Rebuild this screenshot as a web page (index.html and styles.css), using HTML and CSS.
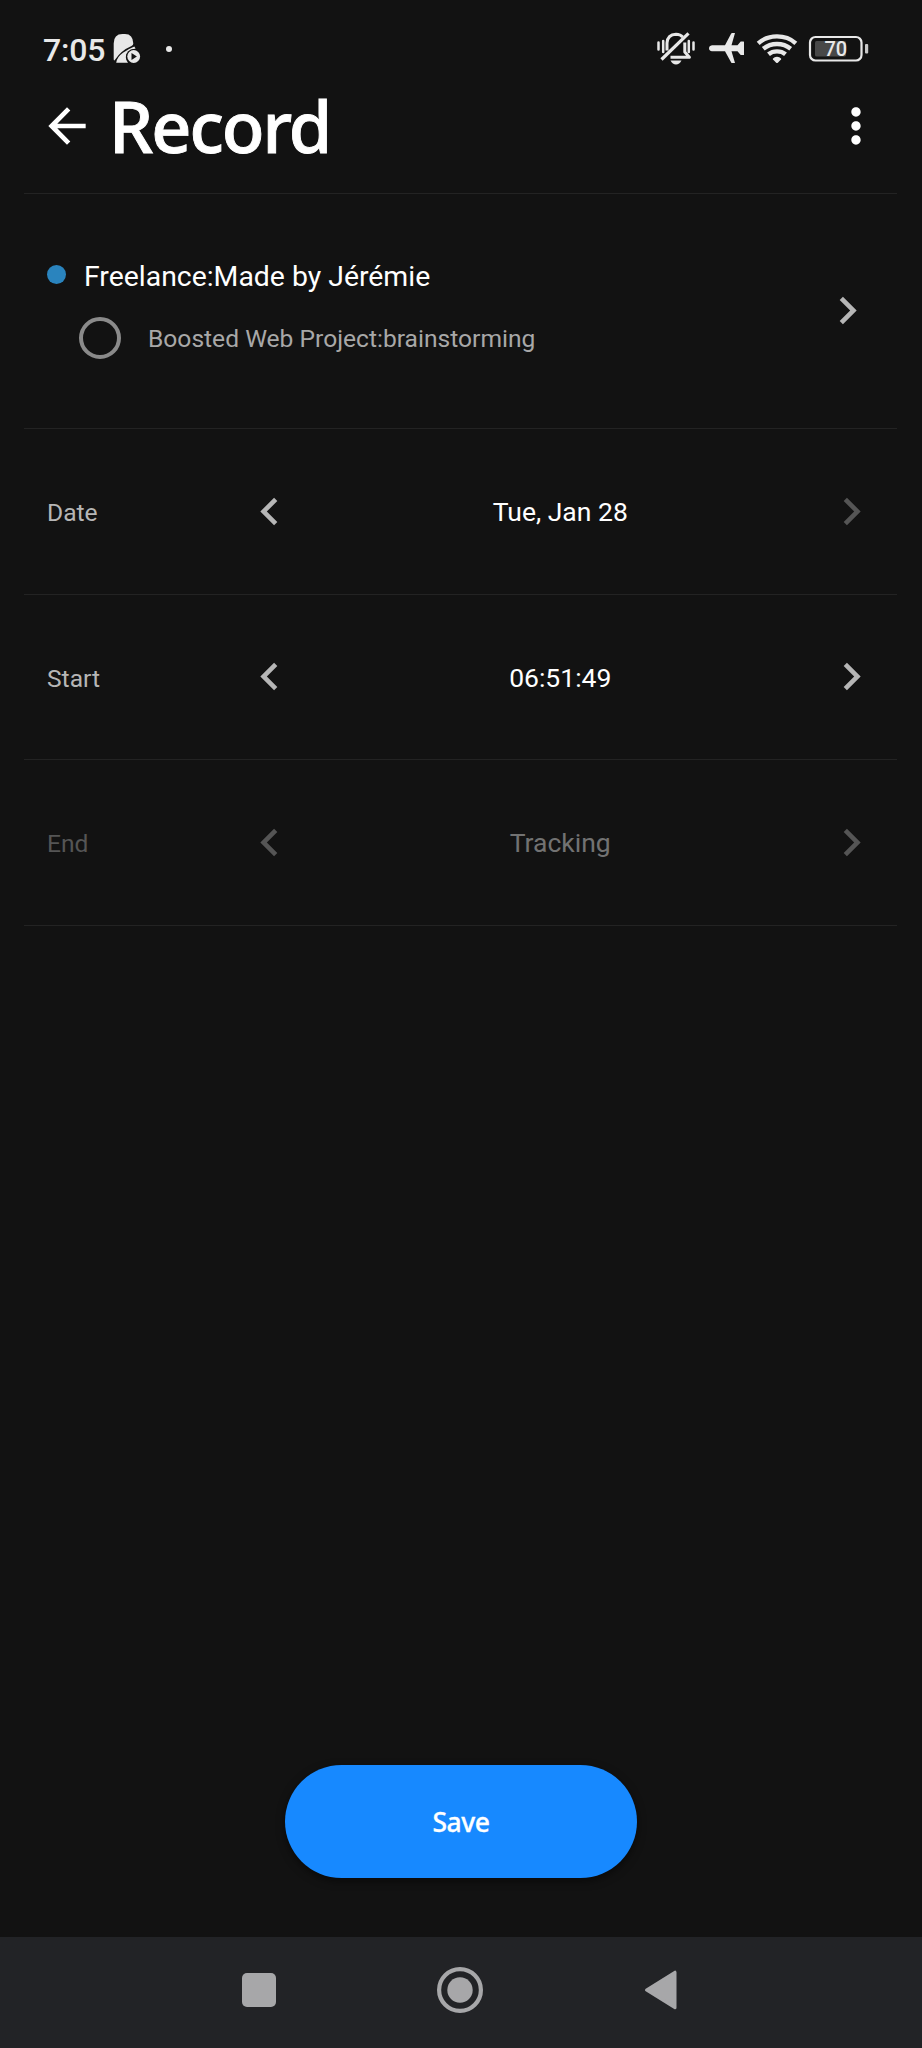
FILE: index.html
```html
<!DOCTYPE html>
<html lang="en">
<head>
<meta charset="utf-8">
<title>Record</title>
<link rel="stylesheet" href="styles.css">
</head>
<body>
<div class="screen">
  <div class="status">
    <span class="clock">7:05</span>
    <svg class="notif" width="28" height="31" viewBox="0 0 28 31">
      <path fill="#e8e8e8" d="M.7 10.500Q.7 1 9.500 1h2.500Q20 1 20.300 10.500Q20.300 12.300 18.500 13Q8 17.500 2 26.800Q.7 28.500.7 26z"/>
      <path fill="#e8e8e8" d="M3.200 29.700Q4 24 10 19.800Q15.500 16 21.300 13.600L22.600 15.600Q13.500 17.200 12.800 24Q13 28 15 29.700z"/>
      <circle cx="20.700" cy="23.500" r="7.600" fill="#121212"/>
      <circle cx="20.700" cy="23.500" r="6.400" fill="#e8e8e8"/>
      <path fill="#121212" d="M18.500 19.900v7.200l5.400-3.600z"/>
    </svg>
    <i class="more-notif"></i>
    <div class="status-icons">
      <svg width="40" height="36" viewBox="0 0 40 36" fill="none" stroke="#e8e8e8" stroke-width="2.500">
        <path d="M2.500 12.500v7M7.200 11v11M32.800 11v11M37.500 12.500v7" stroke-linecap="round"/>
        <path d="M11 20.500v-7.500Q11.500 4.500 20 4.200Q24.500 4.300 26.700 7" stroke-width="3"/>
        <path d="M28.800 12.500v9.500l4.600 5.300H14.500" stroke-width="3" stroke-linejoin="round"/>
        <path d="M32.500 3.300L5.500 29.500" stroke-width="3.200"/>
        <path fill="#e8e8e8" stroke="none" d="M14.500 30.500h11q-2 4-5.500 4t-5.500-4z"/>
      </svg>
      <svg class="plane" width="38" height="36" viewBox="0 0 38 36">
        <path fill="#e8e8e8" d="M4 15.200h13L23.200 3.500Q23.500 3 24.300 3h2.700L23.500 15.200h6L32.700 11.500h2.800q.5 0 .5.600v12.300q0 .6-.5.600h-2.800L29.500 21.200h-6L27 33h-2.700q-.8 0-1.100-.5L17 21.200H4Q1 20.700 1 18.200T4 15.200z"/>
      </svg>
      <svg width="42" height="36" viewBox="0 0 42 36" fill="none" stroke="#e8e8e8" stroke-width="4.400">
        <path d="M2.200 13.300Q10 6.400 21 6.400T39.800 13.300"/>
        <path d="M7.300 18.800Q13.200 14 21 14T34.700 18.800"/>
        <path d="M12.500 24.300Q16 21.400 21 21.400T29.500 24.300"/>
        <path fill="#e8e8e8" stroke="none" d="M21 26.800q2.600 0 4 1.600q.5.600 0 1.100l-3.200 3.200q-.8.700-1.600 0l-3.200-3.200q-.5-.5 0-1.100q1.400-1.600 4-1.600z"/>
      </svg>
      <svg width="62" height="36" viewBox="0 0 62 36">
        <rect x="2" y="7" width="51.500" height="23.500" rx="5.500" fill="none" stroke="#e8e8e8" stroke-width="2.200"/>
        <rect x="57" y="14" width="3.200" height="9.500" rx="1" fill="#c8c8c8"/>
        <rect x="7" y="11" width="31" height="15.500" rx="1.500" fill="#484848"/>
        <text class="battery-text" x="27.800" y="26" text-anchor="middle">70</text>
      </svg>
    </div>
  </div>

  <header class="header">
    <svg width="56" height="56" viewBox="0 0 24 24" fill="#fff"><path d="M20 11H7.830l5.590-5.590L12 4l-8 8 8 8 1.410-1.410L7.830 13H20z"/></svg>
    <h1 class="title">Record</h1>
    <svg class="menu" width="56" height="56" viewBox="0 0 24 24" fill="#fff"><path d="M12 8c1.100 0 2-.9 2-2s-.9-2-2-2-2 .9-2 2 .9 2 2 2zm0 2c-1.100 0-2 .9-2 2s.9 2 2 2 2-.9 2-2-.9-2-2-2zm0 6c-1.100 0-2 .9-2 2s.9 2 2 2 2-.9 2-2-.9-2-2-2z"/></svg>
  </header>

  <section class="task">
    <div class="task-lines">
      <div class="project"><i class="dot"></i><span class="project-name">Freelance:Made by Jérémie</span></div>
      <div class="subtask"><i class="ring"></i><span class="subtask-name">Boosted Web Project:brainstorming</span></div>
    </div>
    <svg class="chev" viewBox="0 0 24 24"><path d="M10 6L8.590 7.410 13.170 12l-4.580 4.590L10 18l6-6z"/></svg>
  </section>

  <section class="row">
    <span class="label">Date</span>
    <svg class="chev" viewBox="0 0 24 24"><path d="M15.410 7.410L14 6l-6 6 6 6 1.410-1.410L10.830 12z"/></svg>
    <span class="value">Tue, Jan 28</span>
    <svg class="chev dim" viewBox="0 0 24 24"><path d="M10 6L8.590 7.410 13.170 12l-4.580 4.590L10 18l6-6z"/></svg>
  </section>
  <section class="row">
    <span class="label">Start</span>
    <svg class="chev" viewBox="0 0 24 24"><path d="M15.410 7.410L14 6l-6 6 6 6 1.410-1.410L10.830 12z"/></svg>
    <span class="value">06:51:49</span>
    <svg class="chev" viewBox="0 0 24 24"><path d="M10 6L8.590 7.410 13.170 12l-4.580 4.590L10 18l6-6z"/></svg>
  </section>
  <section class="row">
    <span class="label off">End</span>
    <svg class="chev dim" viewBox="0 0 24 24"><path d="M15.410 7.410L14 6l-6 6 6 6 1.410-1.410L10.830 12z"/></svg>
    <span class="value value-off">Tracking</span>
    <svg class="chev dim" viewBox="0 0 24 24"><path d="M10 6L8.590 7.410 13.170 12l-4.580 4.590L10 18l6-6z"/></svg>
  </section>

  <div class="actions"><button class="save">Save</button></div>

  <nav class="nav">
    <svg width="48" height="48" viewBox="0 0 48 48" fill="#a7a7a9"><rect x="7" y="7" width="34" height="34" rx="5"/></svg>
    <svg width="48" height="48" viewBox="0 0 48 48" fill="#a7a7a9"><circle cx="24" cy="24" r="20.900" fill="none" stroke="#a7a7a9" stroke-width="4.200"/><circle cx="24" cy="24" r="12.700"/></svg>
    <svg width="48" height="48" viewBox="0 0 48 48" fill="#a7a7a9"><path stroke="#a7a7a9" stroke-width="3" stroke-linejoin="round" d="M8.500 24L37 6.200v35.600z"/></svg>
  </nav>
</div>
</body>
</html>
```
FILE: styles.css
```css
* { box-sizing: border-box; }
body { margin: 0; background: #121212; color: #fff; font-family: Roboto, "Noto Sans", sans-serif; }
svg { display: block; flex: none; }
.screen { width: 922px; height: 2048px; display: flex; flex-direction: column; overflow: hidden; }

.status { height: 80px; display: flex; align-items: flex-start; padding-left: 43px; }
.clock { width: 70px; padding-top: 32px; font-size: 32px; line-height: 37px; font-weight: 500; letter-spacing: -0.200px; color: #e8e8e8; white-space: nowrap; }
.notif { margin-top: 33px; }
.more-notif { width: 6px; height: 6px; margin: 46px 0 0 25px; border-radius: 50%; background: #e8e8e8; }
.status-icons { display: flex; margin: 30px 52px 0 auto; gap: 11px; }
.status-icons .plane { margin: 0 -1px 0 1px; }
.battery-text { font: 500 20px Roboto, sans-serif; fill: #e8e8e8; }
.status-icons svg:nth-child(4) { margin-left: -1px; }

.header { height: 114px; display: flex; align-items: flex-start; padding: 18px 38.500px 0 39px; }
.title { margin: -20px 0 0 14px; font: 500 70px/96px "Noto Sans", sans-serif; letter-spacing: -2px; -webkit-text-stroke: 0.900px #fff; }
.menu { margin-left: auto; }

.task { height: 236px; margin: -1px 25px 0 24px; border-top: 1px solid #232323; border-bottom: 1px solid #232323; display: flex; justify-content: space-between; }
.task-lines { padding: 64px 0 0 22px; }
.project, .subtask { display: flex; align-items: center; }
.project { height: 36px; }
.dot { width: 19px; height: 19px; border-radius: 50%; background: #2a84be; margin: 0 0 3px 1px; }
.project-name { margin-left: 18px; padding-top: 1px; font-size: 28.400px; line-height: 36px; }
.subtask { height: 42px; margin-top: 23px; padding-left: 31px; }
.ring { width: 42px; height: 42px; margin-left: 2px; border-radius: 50%; border: 4px solid #8a8a8a; }
.subtask-name { margin-left: 27px; padding-top: 1px; font-size: 24.600px; color: #a8a8a8; }
.chev { width: 55px; height: 55px; fill: #b6b6b6; }
.chev.dim { fill: #555; }
.task .chev { margin: 89px 22.500px 0 0; }

.row { height: 165.500px; margin: 0 25px 0 24px; border-bottom: 1px solid #232323; display: flex; align-items: center; padding-right: 18px; }
.label { width: 217.500px; padding: 3px 0 0 23px; font-size: 24.600px; color: #b6b6b6; }
.label.off { color: #555; }
.value { flex: 1; padding: 1px 0 0; text-align: center; font-size: 26.500px; }
.value-off { color: #727272; }

.actions { flex: 1; display: flex; align-items: flex-end; justify-content: center; padding-bottom: 59px; }
.save { width: 352px; height: 113px; padding: 0; border: 0; border-radius: 57px; background: #1789ff; color: #fff; font: 500 26.500px/36px "Noto Sans", sans-serif; letter-spacing: -0.500px; -webkit-text-stroke: 0.300px #fff; box-shadow: 0 3px 8px rgba(0, 0, 0, .5); }
.nav { height: 111px; background: #222326; display: flex; justify-content: center; padding: 29px 1.500px 0 0; gap: 153.500px; }
```
